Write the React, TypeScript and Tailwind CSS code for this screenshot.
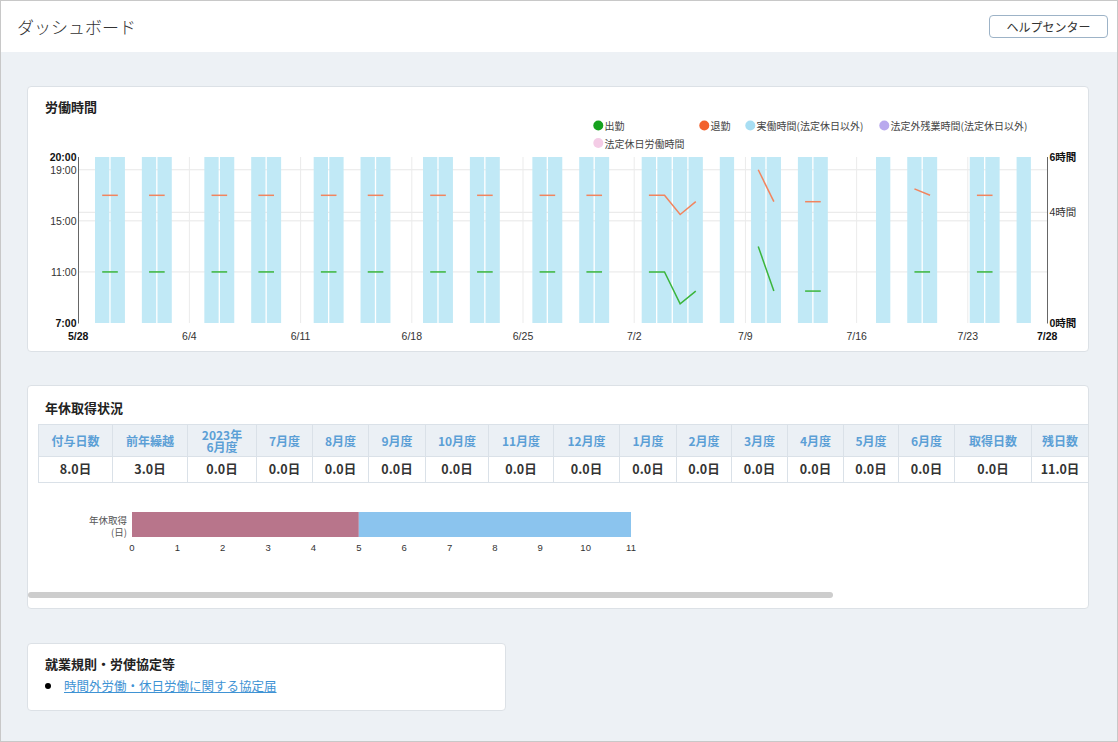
import React from 'react';

// chart scales (page coordinates, the svg viewBox starts at the card's content box)
const X0 = 78.2;
const DAY = 15.886;
const tx = (d: number) => X0 + d * DAY;
const Y20 = 157;
const HOUR = 12.77;
const ty = (h: number) => Y20 + (20 - h) * HOUR;
const barLeft = (k: number) => 95 + k * 15.62;
const barMid = (k: number) => 102.2 + k * 15.62;

const workDays = [0, 1, 3, 4, 7, 8, 10, 11, 14, 15, 17, 18, 21, 22, 24, 25, 28, 29, 31, 32, 35, 36, 37, 38, 40, 42, 43, 45, 46, 50, 52, 53, 56, 57, 59];

const times: Record<number, [number, number]> = {
    35: [11, 17], 36: [11, 17], 37: [8.5, 15.5], 38: [9.5, 16.5],
    42: [13, 19], 43: [9.5, 16.5], 45: [9.5, 16.5], 46: [9.5, 16.5],
    52: [11, 17.5], 53: [11, 17], 56: [11, 17], 57: [11, 17],
};
for (const k of workDays) if (k <= 32) times[k] = [11, 17];

// consecutive days with data are joined by a line
const runs: number[][] = [];
Object.keys(times).map(Number).sort((a, b) => a - b).forEach((k) => {
    const last = runs[runs.length - 1];
    if (last && last[last.length - 1] === k - 1) last.push(k);
    else runs.push([k]);
});

const weekTicks = ['5/28', '6/4', '6/11', '6/18', '6/25', '7/2', '7/9', '7/16', '7/23'];

const legend = [
    { x: 598.3, y: 125.5, c: '#16a11e', t: '出勤' },
    { x: 704.3, y: 125.5, c: '#f2612d', t: '退勤' },
    { x: 750.3, y: 125.5, c: '#a8def3', t: '実働時間(法定休日以外)' },
    { x: 884.3, y: 125.5, c: '#b9a9ee', t: '法定外残業時間(法定休日以外)' },
    { x: 598.3, y: 143, c: '#f4cce6', t: '法定休日労働時間' },
];

const cols = [
    { h: '付与日数', w: 'w-[74px]', v: '8.0日' },
    { h: '前年繰越', w: 'w-[75px]', v: '3.0日' },
    { h: '2023年\n6月度', w: 'w-[69px]', v: '0.0日' },
    { h: '7月度', w: 'w-[56px]', v: '0.0日' },
    { h: '8月度', w: 'w-[56px]', v: '0.0日' },
    { h: '9月度', w: 'w-[57px]', v: '0.0日' },
    { h: '10月度', w: 'w-[63px]', v: '0.0日' },
    { h: '11月度', w: 'w-[65px]', v: '0.0日' },
    { h: '12月度', w: 'w-[66px]', v: '0.0日' },
    { h: '1月度', w: 'w-[57px]', v: '0.0日' },
    { h: '2月度', w: 'w-[55px]', v: '0.0日' },
    { h: '3月度', w: 'w-[56px]', v: '0.0日' },
    { h: '4月度', w: 'w-[56px]', v: '0.0日' },
    { h: '5月度', w: 'w-[55px]', v: '0.0日' },
    { h: '6月度', w: 'w-[56px]', v: '0.0日' },
    { h: '取得日数', w: 'w-[77px]', v: '0.0日' },
    { h: '残日数', w: 'w-[57px]', v: '11.0日' },
];

const chartFont = "'Liberation Sans','Noto Sans CJK JP',sans-serif";

function WorkChart() {
    const gridY = [ty(19), 212.3, ty(15), ty(11)];
    return (
        <svg width={1060} height={235} viewBox="28 116 1060 235" className="block" fontFamily={chartFont}>
            {/* legend */}
            {legend.map((l) => (
                <g key={l.t}>
                    <circle cx={l.x} cy={l.y} r={5} fill={l.c} />
                    <text x={l.x + 6.3} y={l.y} fontSize={10} fill="#444" dominantBaseline="central"
                        fontFamily="'Noto Sans CJK JP',sans-serif">{l.t}</text>
                </g>
            ))}

            {/* grid */}
            {gridY.map((y) => (
                <line key={y} x1={78.5} x2={1047.5} y1={y} y2={y} stroke="#e7e7e7" strokeWidth={1} />
            ))}
            {weekTicks.slice(1).map((t, i) => (
                <line key={t} x1={tx((i + 1) * 7)} x2={tx((i + 1) * 7)} y1={157} y2={323} stroke="#ebebeb" strokeWidth={1} />
            ))}

            {/* bars */}
            {workDays.map((k) => (
                <rect key={k} x={barLeft(k)} y={157} width={14.3} height={166} fill="#c1e9f6" />
            ))}

            {/* start / end lines */}
            {runs.filter((r) => r.length > 1).map((r) => (
                <g key={r[0]}>
                    <polyline points={r.map((k) => `${barMid(k)},${ty(times[k][1])}`).join(' ')}
                        fill="none" stroke="#f2845e" strokeWidth={1.5} />
                    <polyline points={r.map((k) => `${barMid(k)},${ty(times[k][0])}`).join(' ')}
                        fill="none" stroke="#3bb53b" strokeWidth={1.5} />
                </g>
            ))}

            {/* axes */}
            <line x1={78.5} x2={78.5} y1={157} y2={323.5} stroke="#666" strokeWidth={1} />
            <line x1={1047.5} x2={1047.5} y1={157} y2={323.5} stroke="#666" strokeWidth={1} />

            {[['20:00', 20, true], ['19:00', 19, false], ['15:00', 15, false], ['11:00', 11, false], ['7:00', 7, true]].map(([t, h, b]) => (
                <text key={t as string} x={76.5} y={ty(h as number)} fontSize={10.5} textAnchor="end" dominantBaseline="central"
                    fill={b ? '#111' : '#333'} fontWeight={b ? 700 : 400}>{t}</text>
            ))}
            {[['6時間', 157, true], ['4時間', 212.3, false], ['0時間', 323, true]].map(([t, y, b]) => (
                <text key={t as string} x={1049.5} y={y as number} fontSize={10.5} dominantBaseline="central"
                    fill={b ? '#111' : '#333'} fontWeight={b ? 700 : 400}>{t}</text>
            ))}
            {weekTicks.map((t, i) => (
                <text key={t} x={tx(i * 7)} y={335.5} fontSize={10.5} textAnchor="middle" dominantBaseline="central"
                    fill={i === 0 ? '#111' : '#333'} fontWeight={i === 0 ? 700 : 400}>{t}</text>
            ))}
            <text x={tx(61)} y={335.5} fontSize={10.5} textAnchor="middle" dominantBaseline="central" fill="#111" fontWeight={700}>7/28</text>
        </svg>
    );
}

function LeaveBar() {
    const unit = 499 / 11;
    return (
        <svg width={1060} height={108} viewBox="28 482 1060 108" className="block" fontFamily={chartFont}>
            <rect x={132} y={512} width={5 * unit} height={25} fill="#b8758b" />
            <rect x={132 + 5 * unit} y={512} width={6 * unit} height={25} fill="#8bc4ee" />
            <text x={127} y={520} fontSize={9.5} textAnchor="end" dominantBaseline="central" fill="#555"
                fontFamily="'Noto Sans CJK JP',sans-serif">年休取得</text>
            <text x={127} y={532} fontSize={9.5} textAnchor="end" dominantBaseline="central" fill="#555"
                fontFamily="'Noto Sans CJK JP',sans-serif">(日)</text>
            {Array.from({ length: 12 }, (_, i) => (
                <text key={i} x={132 + i * unit} y={547} fontSize={9.5} textAnchor="middle" dominantBaseline="central" fill="#333">{i}</text>
            ))}
        </svg>
    );
}

export default function App() {
    return (
        <div className="w-[1118px] h-[742px] overflow-hidden border border-[#c8c8c8] bg-[#edf1f5] text-[#333] font-['Noto_Sans_CJK_JP',sans-serif]">
            <header className="h-[51px] bg-white flex items-center justify-between pl-[16px] pr-[9px]">
                <h1 className="text-[17px] leading-none font-light text-[#333]">ダッシュボード</h1>
                <button className="w-[119px] h-[23px] rounded-[4px] border border-[#9db3c7] bg-white text-[12px] leading-none text-[#333]">
                    ヘルプセンター
                </button>
            </header>

            <main className="pl-[26px] pt-[34px]">
                {/* 労働時間 */}
                <section className="w-[1062px] h-[266px] bg-white border border-[#dce1e6] rounded-[4px]">
                    <h2 className="pt-[11px] pl-[17px] text-[13px] leading-[18px] font-bold text-[#222]">労働時間</h2>
                    <WorkChart />
                </section>

                {/* 年休取得状況 */}
                <section className="mt-[33px] w-[1062px] h-[224px] bg-white border border-[#dce1e6] rounded-[4px]">
                    <h2 className="pt-[13px] pl-[17px] text-[13px] leading-[18px] font-bold text-[#222]">年休取得状況</h2>
                    <div className="mt-[7px] w-[1060px] overflow-hidden">
                        <div className="h-[58px] pl-[10px]">
                            <table className="table-fixed border-collapse w-[1050px]">
                                <thead>
                                    <tr className="h-[32px]">
                                        {cols.map((c) => (
                                            <th key={c.h} className={`${c.w} p-0 border border-[#dae1e8] bg-[#ebf0f5] text-[12px] leading-[12px] font-bold text-[#5b9fd6] text-center align-middle whitespace-pre-line`}>
                                                {c.h}
                                            </th>
                                        ))}
                                    </tr>
                                </thead>
                                <tbody>
                                    <tr className="h-[26px]">
                                        {cols.map((c) => (
                                            <td key={c.h} className="p-0 border border-[#dae1e8] text-[12.5px] font-bold text-[#333] text-center align-middle">
                                                {c.v}
                                            </td>
                                        ))}
                                    </tr>
                                </tbody>
                            </table>
                        </div>
                        <LeaveBar />
                        <div className="pt-[2px]">
                            <div className="w-[805px] h-[6px] rounded-full bg-[#cdcdcd]" />
                        </div>
                    </div>
                </section>

                {/* 就業規則・労使協定等 */}
                <section className="mt-[34px] w-[479px] h-[68px] bg-white border border-[#dce1e6] rounded-[4px]">
                    <h2 className="pt-[11px] pl-[17px] text-[13px] leading-[18px] font-bold text-[#222]">就業規則・労使協定等</h2>
                    <ul className="mt-[4px] pl-[17px]">
                        <li className="flex items-center h-[18px]">
                            <span className="w-[6px] h-[6px] rounded-full bg-black mr-[13px]" />
                            <a href="#" className="text-[12.5px] leading-[18px] text-[#3f93d4] underline">
                                時間外労働・休日労働に関する協定届
                            </a>
                        </li>
                    </ul>
                </section>
            </main>
        </div>
    );
}
